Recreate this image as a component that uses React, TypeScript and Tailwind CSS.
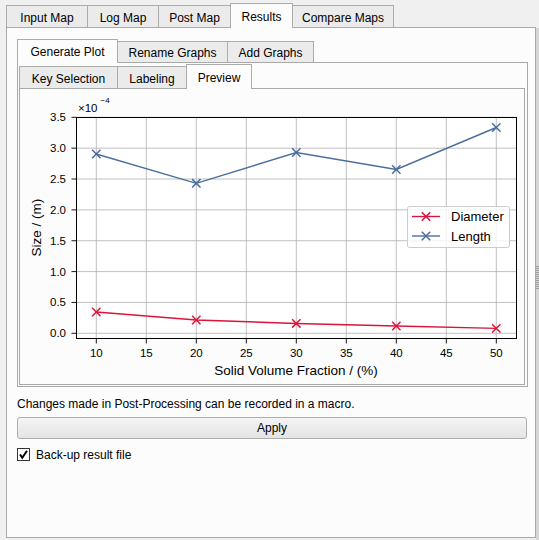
import React from 'react';

type TabDef = [string, string];

const X = (v: number) => 96.3 + (v - 10) * 10;
const Y = (v: number) => 333.3 - v * 61.71;

const length: [number, number][] = [[10, 2.905], [20, 2.43], [30, 2.93], [40, 2.655], [50, 3.335]];
const diameter: [number, number][] = [[10, 0.345], [20, 0.215], [30, 0.16], [40, 0.118], [50, 0.08]];

function TabBar({ tabs, active, barCls, selCls, unselCls }: { tabs: TabDef[]; active: number; barCls: string; selCls: string; unselCls: string }) {
  return (
    <div className={`flex items-end ${barCls}`}>
      {tabs.map(([label, w], i) => (
        <div
          key={label}
          className={`flex justify-center border border-b-0 border-[#acacac] whitespace-nowrap text-[12px] leading-[14px] text-black ${w} ${i > 0 ? '-ml-px' : ''} ${
            i === active ? `relative z-10 -mb-px bg-[#fcfcfc] ${selCls}` : `bg-[#ebebeb] ${unselCls}`
          }`}
        >
          {label}
        </div>
      ))}
    </div>
  );
}

function Marker({ x, y, color }: { x: number; y: number; color: string }) {
  return (
    <g stroke={color} strokeWidth={1.5}>
      <line x1={x - 4.2} y1={y - 4.2} x2={x + 4.2} y2={y + 4.2} />
      <line x1={x - 4.2} y1={y + 4.2} x2={x + 4.2} y2={y - 4.2} />
    </g>
  );
}

function Series({ data, color }: { data: [number, number][]; color: string }) {
  const pts = data.map(([a, b]) => `${X(a)},${Y(b)}`).join(' ');
  return (
    <g>
      <polyline points={pts} fill="none" stroke={color} strokeWidth={1.4} />
      {data.map(([a, b]) => <Marker key={a} x={X(a)} y={Y(b)} color={color} />)}
    </g>
  );
}

function Plot() {
  const red = '#dc143c';
  const blue = '#4a6d9f';
  const xt = [10, 15, 20, 25, 30, 35, 40, 45, 50];
  const yt = [0, 0.5, 1, 1.5, 2, 2.5, 3, 3.5];
  return (
    <svg viewBox="20 89 504 295" width={504} height={295} className="block" fontFamily="'Liberation Sans', Arial, sans-serif">
      <rect x={76.5} y={117.5} width={440} height={221} fill="#ffffff" />
      {/* grid */}
      <g stroke="#b0b0b0" strokeWidth={0.8}>
        {xt.map(v => <line key={v} x1={X(v)} y1={117.5} x2={X(v)} y2={338.5} />)}
        {yt.map(v => <line key={v} x1={76.5} y1={Y(v)} x2={516.5} y2={Y(v)} />)}
      </g>
      <Series data={diameter} color={red} />
      <Series data={length} color={blue} />
      <rect x={76.5} y={117.5} width={440} height={221} fill="none" stroke="#000" strokeWidth={1} />
      {/* ticks */}
      <g stroke="#000" strokeWidth={0.9}>
        {xt.map(v => <line key={v} x1={X(v)} y1={338.5} x2={X(v)} y2={343.5} />)}
        {yt.map(v => <line key={v} x1={71.5} y1={Y(v)} x2={76.5} y2={Y(v)} />)}
      </g>
      <g fontSize={11.5} fill="#000">
        {xt.map(v => <text key={v} x={X(v)} y={357} textAnchor="middle">{v}</text>)}
        {yt.map(v => <text key={v} x={66} y={Y(v) + 4} textAnchor="end">{v.toFixed(1)}</text>)}
        <text x={78} y={112}>×10</text>
        <text x={100.5} y={103} fontSize={8}>−4</text>
      </g>
      <text x={296} y={375} fontSize={13.5} textAnchor="middle">Solid Volume Fraction / (%)</text>
      <text x={40.5} y={227.5} fontSize={13.5} textAnchor="middle" transform="rotate(-90 40.5 227.5)">Size / (m)</text>
      {/* legend */}
      <rect x={407.5} y={206.5} width={102} height={41} rx={2} fill="#ffffff" fillOpacity={0.8} stroke="#cccccc" />
      <line x1={412} y1={216.5} x2={440} y2={216.5} stroke={red} strokeWidth={1.4} />
      <Marker x={426} y={216.5} color={red} />
      <text x={451} y={221} fontSize={13}>Diameter</text>
      <line x1={412} y1={236} x2={440} y2={236} stroke={blue} strokeWidth={1.4} />
      <Marker x={426} y={236} color={blue} />
      <text x={451} y={240.5} fontSize={13}>Length</text>
    </svg>
  );
}

export default function App() {
  return (
    <div className="flex w-[539px] h-[540px] bg-[#f0f0f0] overflow-hidden font-['Liberation_Sans',Arial,sans-serif] text-black">
      {/* main tab widget */}
      <div className="flex flex-col w-[536px] pt-[3px] pl-[6px]">
        <TabBar
          tabs={[['Input Map', 'w-[82px]'], ['Log Map', 'w-[72px]'], ['Post Map', 'w-[73px]'], ['Results', 'w-[63px]'], ['Compare Maps', 'w-[102px]']]}
          active={3}
          barCls="h-[24px]"
          selCls="h-[25px] pt-[6px]"
          unselCls="h-[22px] pt-[5px]"
        />
        <div className="flex flex-col w-[530px] h-[511px] border border-[#a9a9a9] bg-[#fcfcfc] pt-[11px] pl-[10px]">
          <TabBar
            tabs={[['Generate Plot', 'w-[101px]'], ['Rename Graphs', 'w-[111px]'], ['Add Graphs', 'w-[87px]']]}
            active={0}
            barCls="h-[23px]"
            selCls="h-[24px] pt-[5px]"
            unselCls="h-[21px] pt-[4px]"
          />
          <div className="flex flex-col w-[511px] h-[325px] border border-[#a9a9a9] bg-[#fcfcfc] pt-px pl-px">
            <TabBar
              tabs={[['Key Selection', 'w-[99px]'], ['Labeling', 'w-[70px]'], ['Preview', 'w-[66px]']]}
              active={2}
              barCls="h-[24px]"
              selCls="h-[25px] pt-[6px]"
              unselCls="h-[22px] pt-[5px]"
            />
            <div className="w-[506px] h-[297px] border border-[#a9a9a9] bg-[#fcfcfc]">
              <Plot />
            </div>
          </div>

          <p className="mt-[10px] text-[12px] leading-[14px]">Changes made in Post-Processing can be recorded in a macro.</p>

          <button className="mt-[6px] w-[510px] h-[22px] rounded-[3px] border border-[#adadad] bg-gradient-to-b from-[#f4f4f4] to-[#e4e4e4] text-[12px] leading-[14px] text-black">
            Apply
          </button>

          <div className="mt-[9px] flex items-center h-[13px]">
            <div className="w-[13px] h-[13px] border border-[#333333] bg-white flex items-center justify-center">
              <svg width="11" height="11" viewBox="0 0 11 11">
                <path d="M2 5.5 L4.3 8.7 L9 1.8" fill="none" stroke="#000" strokeWidth={2} />
              </svg>
            </div>
            <span className="ml-[6px] text-[12px] leading-[14px]">Back-up result file</span>
          </div>
        </div>
      </div>

      {/* splitter strip */}
      <div className="w-[3px] mt-[28px] h-[512px] bg-[#d6d6d6] pt-[238px]">
        <div className="flex flex-col gap-px">
          {Array.from({ length: 12 }).map((_, i) => (
            <div key={i} className="h-px bg-[#9c9c9c]" />
          ))}
        </div>
      </div>
    </div>
  );
}
